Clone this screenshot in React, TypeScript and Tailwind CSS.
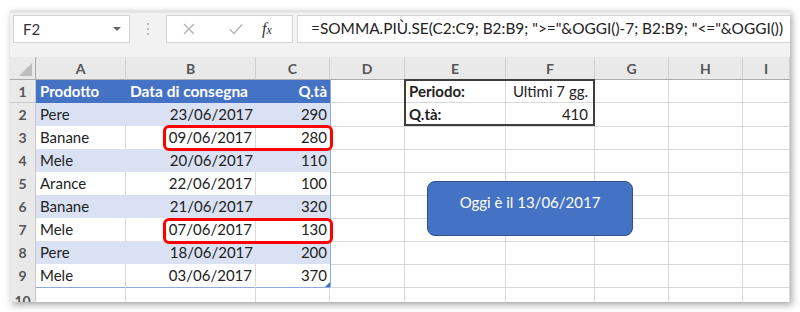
import React from "react";

/**
 * Excel sheet: SOMMA.PIÙ.SE over the last 7 days, with a callout for today.
 */

type Row = { prodotto: string; data: string; qta: string };

const ROWS: Row[] = [
  { prodotto: "Pere", data: "23/06/2017", qta: "290" },
  { prodotto: "Banane", data: "09/06/2017", qta: "280" },
  { prodotto: "Mele", data: "20/06/2017", qta: "110" },
  { prodotto: "Arance", data: "22/06/2017", qta: "100" },
  { prodotto: "Banane", data: "21/06/2017", qta: "320" },
  { prodotto: "Mele", data: "07/06/2017", qta: "130" },
  { prodotto: "Pere", data: "18/06/2017", qta: "200" },
  { prodotto: "Mele", data: "03/06/2017", qta: "370" },
];

const COL_LETTERS = ["A", "B", "C", "D", "E", "F", "G", "H", "I"];

const GRID =
  "grid grid-cols-[26px_90px_130px_74px_75px_101px_89px_74px_74px_47px]";

const cell = "flex items-center border-r border-b border-[#d9d9d9] px-[4px] truncate";
const rowNum =
  "flex items-center justify-center bg-[#e9e9e9] border-r border-b border-[#c9c9c9] text-[#555] text-[14px] font-bold";

function EmptyCells({ from }: { from: number }) {
  // remaining plain cells
  return (
    <>
      {COL_LETTERS.slice(from).map((c) => (
        <div key={c} className={cell} />
      ))}
    </>
  );
}

function FormulaBar() {
  return (
    <div className="flex h-[47px] items-start bg-[#f2f2f2] border-t-[3px] border-[#e4e4e4] pt-[2px] pl-[3px]">
      <div className="flex h-[28px] w-[117px] items-center justify-between border border-[#d4d4d4] bg-white pl-[9px] pr-[8px] text-[15px] text-[#333]">
        <span>F2</span>
        <span className="h-0 w-0 border-x-[4px] border-t-[4px] border-x-transparent border-t-[#666]" />
      </div>
      <div className="flex h-[28px] w-[36px] flex-col items-center justify-center gap-[3px]">
        <span className="h-[2px] w-[2px] rounded-full bg-[#a8a8a8]" />
        <span className="h-[2px] w-[2px] rounded-full bg-[#a8a8a8]" />
        <span className="h-[2px] w-[2px] rounded-full bg-[#a8a8a8]" />
      </div>
      <div className="flex h-[28px] w-[127px] items-center border border-[#d4d4d4] bg-white">
        <svg width="14" height="14" viewBox="0 0 14 14" className="ml-[15px]">
          <path d="M2 2 L12 12 M12 2 L2 12" stroke="#b4b4b4" strokeWidth="1.4" fill="none" />
        </svg>
        <svg width="16" height="14" viewBox="0 0 16 14" className="ml-[32px]">
          <path d="M2 7.5 L6 11.5 L14 2.5" stroke="#b4b4b4" strokeWidth="1.4" fill="none" />
        </svg>
        <span className="ml-[18px] font-['Liberation_Serif',serif] text-[16px] italic text-[#333]">
          f<span className="text-[12px]">x</span>
        </span>
      </div>
      <div className="ml-[4px] flex h-[28px] flex-1 items-center border border-[#d4d4d4] border-r-0 bg-white pl-[13px] text-[15.4px] text-[#222] whitespace-nowrap">
        =SOMMA.PIÙ.SE(C2:C9; B2:B9; "&gt;="&amp;OGGI()-7; B2:B9; "&lt;="&amp;OGGI())
      </div>
    </div>
  );
}

export default function App() {
  return (
    <div className="h-[312px] w-[800px] bg-white pl-[10px] pt-[10px] font-['Lato','Liberation_Sans',sans-serif]">
      <div className="relative h-[292px] w-[780px] overflow-hidden bg-white shadow-[2px_3px_7px_rgba(0,0,0,0.35)]">
        <FormulaBar />

        <div className={`${GRID} h-[23px] bg-[#e9e9e9] text-[14px] font-bold text-[#555]`}>
          <div className="flex items-end justify-end border-r border-b border-[#ababab] pr-[3px] pb-[3px]">
            <svg width="13" height="13" viewBox="0 0 13 13">
              <path d="M13 0 L13 13 L0 13 Z" fill="#bdbdbd" />
            </svg>
          </div>
          {COL_LETTERS.map((c) => (
            <div
              key={c}
              className="flex items-center justify-center border-r border-b border-r-[#d0d0d0] border-b-[#ababab]"
            >
              {c}
            </div>
          ))}
        </div>

        {/* row 1: table header */}
        <div className={`${GRID} h-[23px] text-[15px] text-[#222]`}>
          <div className={rowNum}>1</div>
          <div className="flex items-center bg-[#4472c4] px-[4px] font-bold text-white">Prodotto</div>
          <div className="flex items-center justify-end bg-[#4472c4] pr-[8px] text-[15.5px] font-bold text-white">
            Data di consegna
          </div>
          <div className="flex items-center justify-end bg-[#4472c4] pr-[3px] font-bold text-white">Q.tà</div>
          <div className={`${cell} border-l border-l-[#8ea9db]`} />
          <div className={`${cell} font-bold`}>Periodo:</div>
          <div className={`${cell} justify-end pr-[6px]`}>Ultimi 7 gg.</div>
          <EmptyCells from={6} />
        </div>

        {ROWS.map((r, i) => {
          const banded = i % 2 === 0;
          const band = banded
            ? "bg-[#d9e1f2] border-b border-[#8ea9db]"
            : "bg-white border-b border-[#8ea9db] border-r border-r-[#d9d9d9]";
          return (
            <div key={i} className={`${GRID} h-[23px] text-[15px] text-[#222]`}>
              <div className={rowNum}>{i + 2}</div>
              <div className={`flex items-center px-[4px] ${band}`}>{r.prodotto}</div>
              <div className={`flex items-center justify-end pr-[3px] ${band}`}>{r.data}</div>
              <div className={`relative flex items-center justify-end pr-[3px] ${band} border-r-0`}>
                {r.qta}
                {i === ROWS.length - 1 && (
                  <svg width="5" height="5" viewBox="0 0 5 5" className="absolute right-0 bottom-0">
                    <path d="M5 0 L5 5 L0 5 Z" fill="#4472c4" />
                  </svg>
                )}
              </div>
              <div className={`${cell} border-l border-l-[#8ea9db]`} />
              {i === 0 ? (
                <>
                  <div className={`${cell} font-bold`}>Q.tà:</div>
                  <div className={`${cell} justify-end pr-[6px]`}>410</div>
                  <EmptyCells from={6} />
                </>
              ) : (
                <EmptyCells from={4} />
              )}
            </div>
          );
        })}

        {/* row 10, cut off by the window edge */}
        <div className={`${GRID} h-[23px] text-[15px]`}>
          <div className={`${rowNum} items-start pt-[3px]`}>10</div>
          <EmptyCells from={0} />
        </div>

        {/* E1:F2 outline */}
        <div className="absolute left-[394px] top-[69px] h-[47px] w-[191px] border-2 border-[#3d3d3d]" />

        {/* red highlights */}
        <div className="absolute left-[153px] top-[115px] h-[26px] w-[170px] rounded-[6px] border-[3px] border-[#ff0000]" />
        <div className="absolute left-[153px] top-[208px] h-[26px] w-[170px] rounded-[6px] border-[3px] border-[#ff0000]" />

        {/* callout */}
        <div className="absolute left-[417px] top-[171px] flex h-[55px] w-[206px] justify-center rounded-[8px] border border-[#2f528f] bg-[#4472c4] pt-[9px] text-[15px] text-white">
          Oggi è il 13/06/2017
        </div>
      </div>
    </div>
  );
}
